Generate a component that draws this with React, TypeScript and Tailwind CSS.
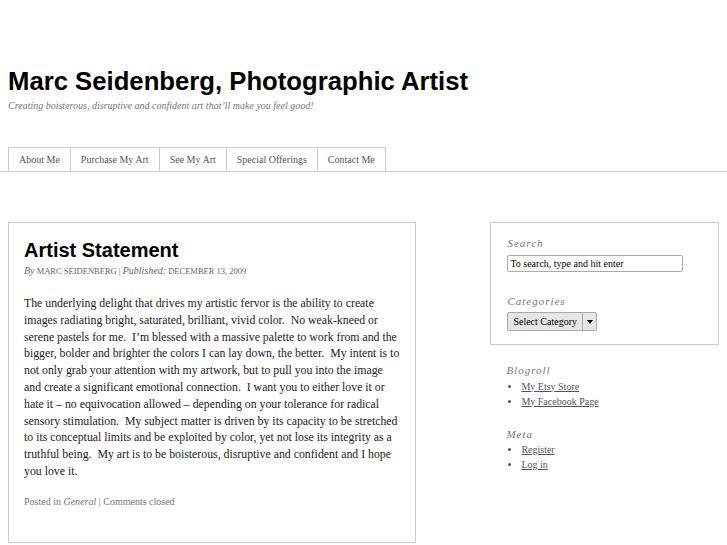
const tabs = ['About Me', 'Purchase My Art', 'See My Art', 'Special Offerings', 'Contact Me'];

const body =
  'The underlying delight that drives my artistic fervor is the ability to create images radiating bright, saturated, brilliant, vivid color.  No weak-kneed or serene pastels for me.  I\u2019m blessed with a massive palette to work from and the bigger, bolder and brighter the colors I can lay down, the better.  My intent is to not only grab your attention with my artwork, but to pull you into the image and create a significant emotional connection.  I want you to either love it or hate it \u2013 no equivocation allowed \u2013 depending on your tolerance for radical sensory stimulation.  My subject matter is driven by its capacity to be stretched to its conceptual limits and be exploited by color, yet not lose its integrity as a truthful being.  My art is to be boisterous, disruptive and confident and I hope you love it.';

function WidgetTitle({ children }: { children: string }) {
  return <h3 className="text-[11px] italic tracking-[1px] text-[#777]">{children}</h3>;
}

export default function App() {
  return (
    <div className="min-h-[545px] bg-white font-['Liberation_Serif',serif] text-[#222]">
      <header className="px-2 pt-[64px]">
        <h1 className="font-['Liberation_Sans',Arial,sans-serif] text-[25.7px] font-bold leading-[34px] text-black">
          Marc Seidenberg, Photographic Artist
        </h1>
        <p className="text-[10px] italic text-[#777]">
          Creating boisterous, disruptive and confident art that&rsquo;ll make you feel good!
        </p>
      </header>

      <nav className="mt-[34px] border-b border-[#ccc] px-2">
        <ul className="flex">
          {tabs.map((t, i) => (
            <li
              key={t}
              className={`border-t border-r border-[#ccc] px-[10px] text-[10px] leading-[23px] text-[#555] ${i === 0 ? 'border-l' : ''}`}
            >
              {t}
            </li>
          ))}
        </ul>
      </nav>

      <div className="mt-[50px] flex items-start px-2">
        <article className="w-[409px] border border-[#ccc] px-[15px] pt-[14px] pb-[33px]">
          <h2 className="font-['Liberation_Sans',Arial,sans-serif] text-[20px] font-bold leading-[26px] text-black">
            Artist Statement
          </h2>
          <p className="text-[8.5px] uppercase text-[#666]">
            <span className="text-[10px] normal-case italic">By</span> Marc Seidenberg |{' '}
            <span className="text-[10px] normal-case italic">Published:</span> December 13, 2009
          </p>
          <p className="mt-[17px] whitespace-pre-wrap text-[11.8px] leading-[16.8px] text-[#222]">{body}</p>
          <p className="mt-[14px] text-[10px] text-[#777]">
            Posted in <span className="italic">General</span> | Comments closed
          </p>
        </article>

        <aside className="ml-[74px] w-[229px]">
          <div className="border border-[#ccc] pt-[12px] pb-[13px] pl-[16px]">
            <WidgetTitle>Search</WidgetTitle>
            <div className="mt-[3px] w-[176px] rounded-[2px] border border-[#aaa] px-[2px] text-[10px] leading-[15px] text-black">
              To search, type and hit enter
            </div>
            <div className="mt-[21px]">
              <WidgetTitle>Categories</WidgetTitle>
            </div>
            <div className="mt-[3px] flex h-[19px] w-[90px] rounded-[2px] border border-[#aaa] bg-[#e6e6e6] text-[10px] text-black">
              <span className="flex items-center border-r border-[#aaa] px-[5px]">Select Category</span>
              <span className="flex flex-1 items-center justify-center">
                <span className="h-0 w-0 border-x-[3px] border-t-[4px] border-x-transparent border-t-black" />
              </span>
            </div>
          </div>

          <div className="mt-[17px] pl-[16px]">
            <WidgetTitle>Blogroll</WidgetTitle>
            <ul className="list-disc pl-[15px] text-[10px] leading-[15px] text-[#555]">
              <li className="underline">My Etsy Store</li>
              <li className="underline">My Facebook Page</li>
            </ul>
            <div className="mt-[17px]">
              <WidgetTitle>Meta</WidgetTitle>
            </div>
            <ul className="list-disc pl-[15px] text-[10px] leading-[15px] text-[#555]">
              <li className="underline">Register</li>
              <li className="underline">Log in</li>
            </ul>
          </div>
        </aside>
      </div>
    </div>
  );
}
